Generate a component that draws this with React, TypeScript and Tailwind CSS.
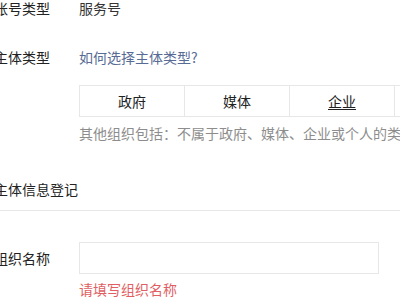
import React from "react";

export default function App() {
  const font = { fontFamily: '"Noto Sans CJK SC", "Microsoft YaHei", sans-serif' };
  return (
    <div className="w-[400px] h-[300px] overflow-hidden bg-white text-[14px] text-[#222]" style={font}>
      <div className="flex leading-[16px]">
        <div className="ml-[-6px] w-[85px] shrink-0">账号类型</div>
        <div className="text-[#333]">服务号</div>
      </div>
      <div className="flex leading-[16px] mt-[33px]">
        <div className="ml-[-6px] w-[85px] shrink-0">主体类型</div>
        <div className="text-[#576b95] whitespace-nowrap">如何选择主体类型?</div>
      </div>
      <div className="ml-[79px] mt-[20px] flex h-[32px] border border-r-0 border-[#e7e7e7] w-[500px]">
        <div className="w-[105px] shrink-0 border-r border-[#e7e7e7] flex items-center justify-center">政府</div>
        <div className="w-[105px] shrink-0 border-r border-[#e7e7e7] flex items-center justify-center">媒体</div>
        <div className="w-[105px] shrink-0 border-r border-[#e7e7e7] flex items-center justify-center">
          <span className="underline underline-offset-2">企业</span>
        </div>
        <div className="w-[105px] shrink-0 border-r border-[#e7e7e7] flex items-center justify-center">个人</div>
      </div>
      <div className="ml-[79px] mt-[8px] leading-[16px] text-[#8d8d8d] whitespace-nowrap">
        其他组织包括：不属于政府、媒体、企业或个人的类型
      </div>
      <div className="ml-[-6px] mt-[40px] leading-[16px]">主体信息登记</div>
      <div className="mt-[13px] h-px bg-[#e7e7e7] w-full"></div>
      <div className="flex items-center mt-[31px]">
        <div className="ml-[-6px] w-[85px] shrink-0 leading-[16px]">组织名称</div>
        <div className="w-[300px] h-[32px] border border-[#e7e7e7] bg-white"></div>
      </div>
      <div className="ml-[79px] mt-[7px] leading-[16px] text-[#e15f63]">请填写组织名称</div>
    </div>
  );
}
